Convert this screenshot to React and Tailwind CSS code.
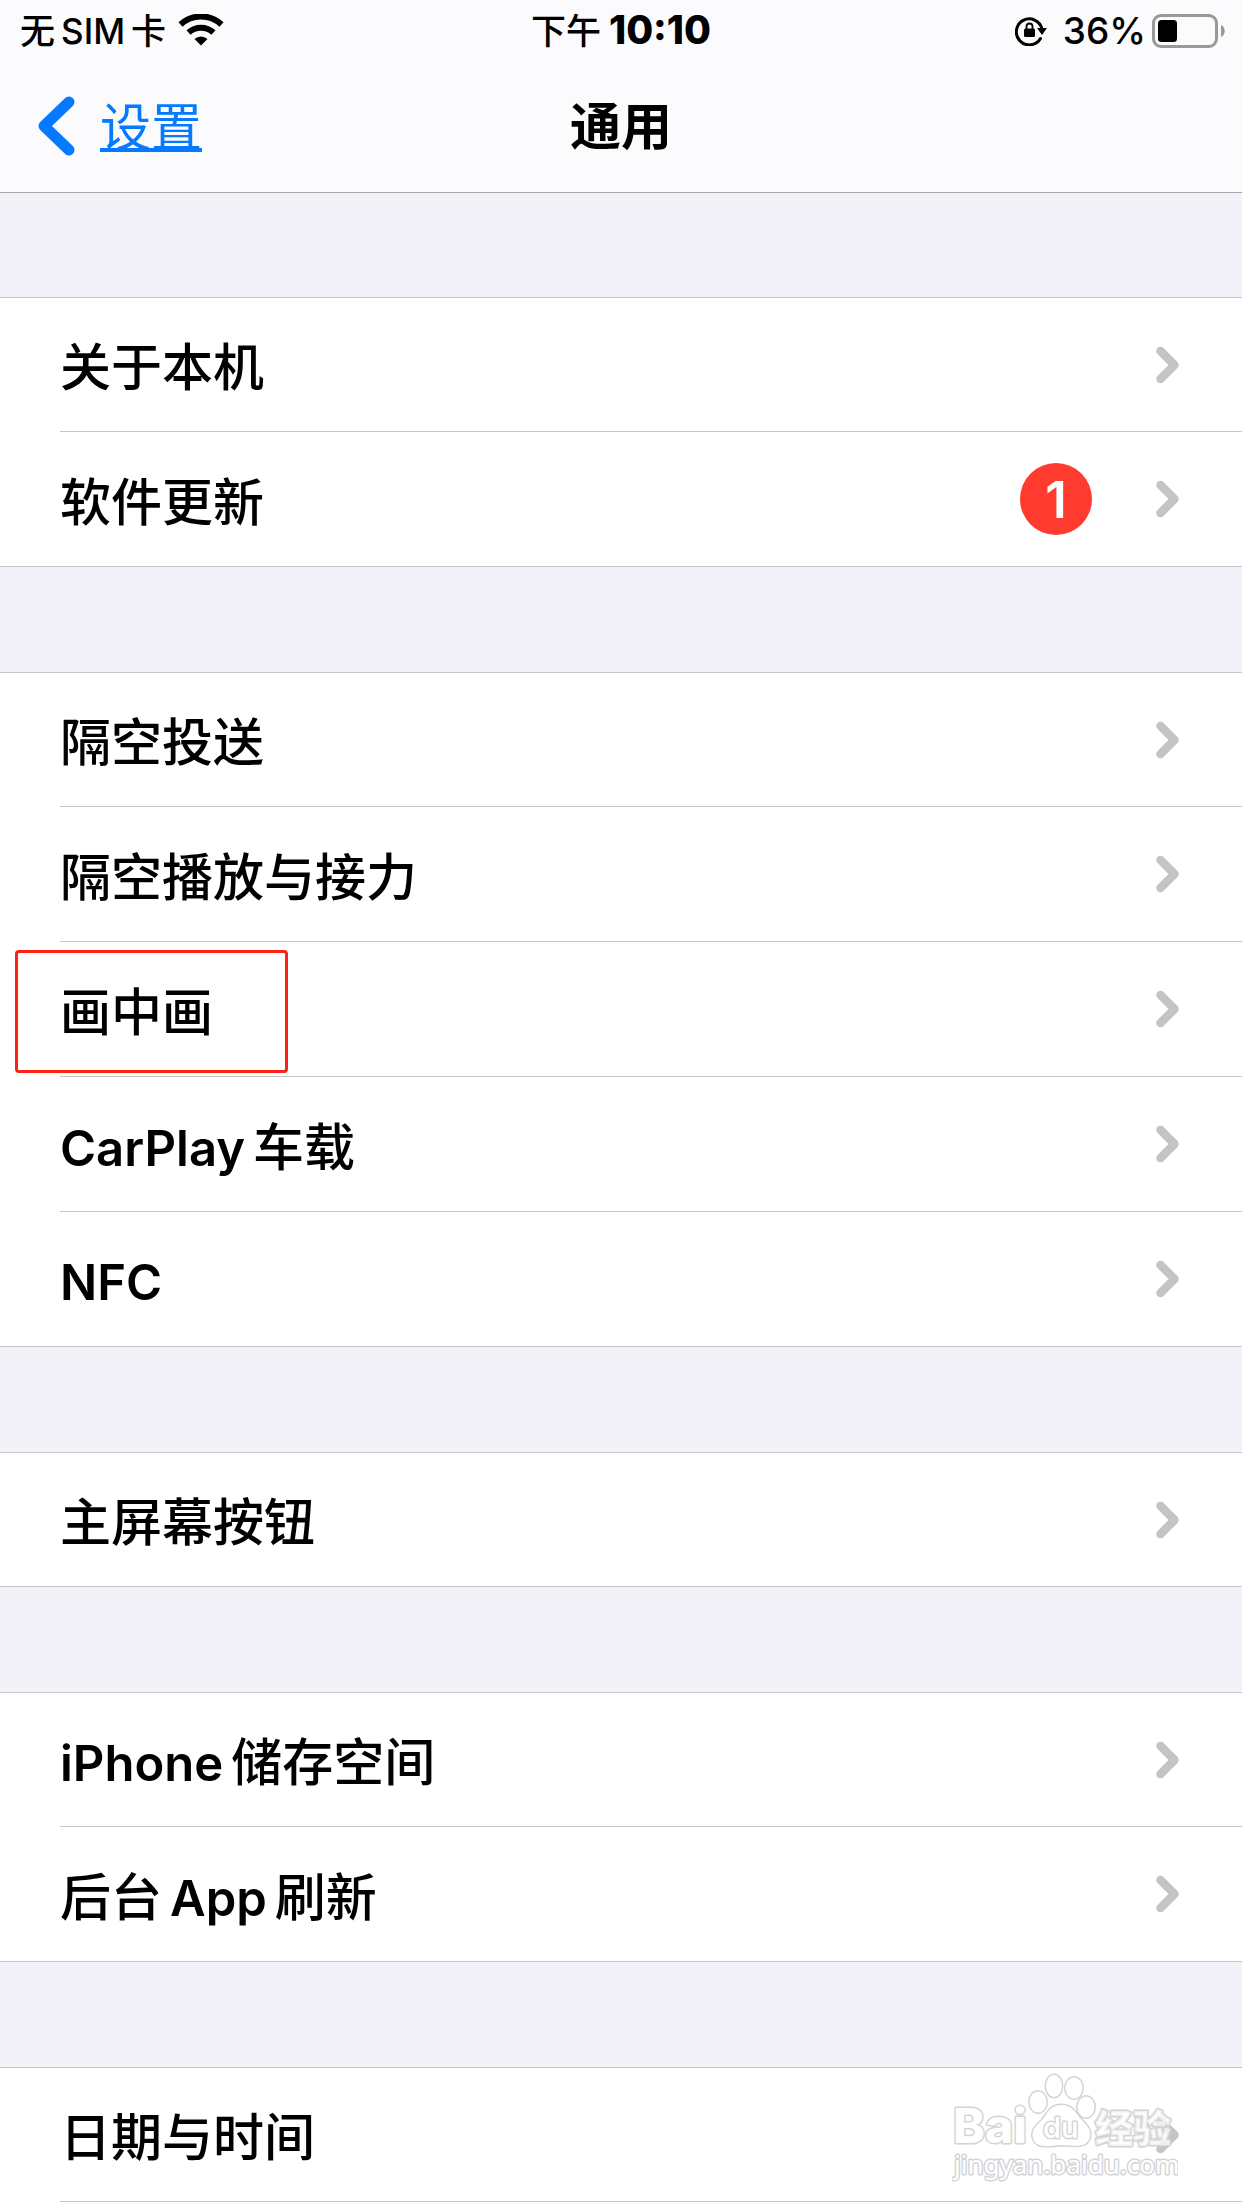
import React from 'react';

// Each label is a list of runs so that latin and chinese parts are set apart evenly
const GROUPS = [
    [
        { id: 'about', label: ['关于本机'] },
        { id: 'update', label: ['软件更新'], badge: 1 },
    ],
    [
        { id: 'airdrop', label: ['隔空投送'] },
        { id: 'airplay', label: ['隔空播放与接力'] },
        { id: 'pip', label: ['画中画'], highlighted: true },
        { id: 'carplay', label: ['CarPlay', '车载'] },
        { id: 'nfc', label: ['NFC'] },
    ],
    [{ id: 'home-button', label: ['主屏幕按钮'] }],
    [
        { id: 'storage', label: ['iPhone', '储存空间'] },
        { id: 'refresh', label: ['后台', 'App', '刷新'] },
    ],
    [{ id: 'date-time', label: ['日期与时间'], watermark: true }],
];

const isLatin = (text) => /^[A-Za-z]/.test(text);

const WifiIcon = () => (
    <svg className="w-[46px] h-[34px]" viewBox="0 0 46 34" fill="none" aria-hidden="true">
        <path d="M2.5 10.500a30 30 0 0 1 41 0" stroke="#000" strokeWidth="6" />
        <path d="M10.5 18.500a18.500 18.500 0 0 1 25 0" stroke="#000" strokeWidth="6" />
        <path d="M16.500 25a9.500 9.500 0 0 1 13 0L23 31.500z" fill="#000" />
    </svg>
);

const RotationLockIcon = () => (
    <svg className="w-8 h-[30px]" viewBox="0 0 32 30" fill="none" aria-hidden="true">
        <path d="M25.5 22.500A13 13 0 1 1 27 13" stroke="#000" strokeWidth="3" strokeLinecap="round" />
        <path d="M22 12h10l-5 7z" fill="#000" />
        <rect x="9" y="12.500" width="11" height="8.500" rx="1.500" fill="#000" />
        <path d="M11.500 13v-2.500a3 3 0 0 1 6 0V13" stroke="#000" strokeWidth="1.800" />
    </svg>
);

const BatteryIcon = () => (
    <svg className="w-[74px] h-[34px]" viewBox="0 0 74 34" fill="none" aria-hidden="true">
        <rect x="1.500" y="1.500" width="63" height="31" rx="7.500" stroke="#999" strokeWidth="3" />
        <rect x="6" y="6" width="19" height="22" rx="3.500" fill="#000" />
        <path d="M69 11c5 2 5 10 0 12z" fill="#999" />
    </svg>
);

const Chevron = () => (
    <svg className="w-6 h-[38px] shrink-0" viewBox="0 0 24 38" fill="none" aria-hidden="true">
        <path d="M4.500 5l14 14-14 14" stroke="#c4c4c6" strokeWidth="8.500" strokeLinecap="round" strokeLinejoin="round" />
    </svg>
);

const Watermark = () => (
    <svg
        className="absolute right-16 top-1 w-[226px] h-[112px]"
        viewBox="0 0 226 112"
        fill="#fff"
        stroke="#d4d4d6"
        strokeWidth="3"
        strokeLinejoin="round"
        paintOrder="stroke"
        aria-hidden="true"
    >
        <text x="1" y="71" fontFamily="Inter, sans-serif" fontSize="48" fontWeight="800">Bai</text>
        <ellipse cx="86" cy="30" rx="8.500" ry="10.500" />
        <ellipse cx="102" cy="14" rx="8" ry="11" />
        <ellipse cx="122" cy="16" rx="8.500" ry="10.500" />
        <ellipse cx="134" cy="35" rx="8.500" ry="10.500" />
        <path d="M109 33c-11 0-14 9-19 15-6 6-11 10-9 18 3 11 15 8 29 7 14 1 25 3 28-8 2-8-5-13-10-19-5-7-9-13-19-13z" />
        <text x="91" y="66" fontFamily="Inter, sans-serif" fontSize="29" fontWeight="500">du</text>
        <text x="143" y="70" fontFamily="'Noto Sans CJK SC', sans-serif" fontSize="38" fontWeight="900" fillOpacity="0.7">经验</text>
        <text x="2" y="102" fontFamily="'Noto Sans', sans-serif" fontSize="26">jingyan.baidu.com</text>
    </svg>
);

const StatusBar = () => (
    <div className="grid grid-cols-3 items-center h-[60px] pt-px px-4 text-[35px] leading-[58px] font-medium">
        <div className="flex items-center gap-3 pl-1">
            <span className="flex gap-1.5">
                <span>无</span>
                <span>SIM</span>
                <span>卡</span>
            </span>
            <WifiIcon />
        </div>
        <div className="flex items-baseline justify-center gap-2">
            <span>下午</span>
            <span className="text-[39px] font-extrabold">10:10</span>
        </div>
        <div className="flex items-center justify-end">
            <RotationLockIcon />
            <span className="ml-4 mr-1.5 text-[37px]">36%</span>
            <BatteryIcon />
        </div>
    </div>
);

const NavBar = () => (
    <nav className="grid grid-cols-3 items-center h-[132px] px-9 text-[51px]">
        <a href="#settings" className="flex items-center gap-6 text-[#067aff]">
            <svg className="w-10 h-[60px]" viewBox="0 0 40 60" fill="none" aria-hidden="true">
                <path d="M33 6L8 30l25 24" stroke="currentColor" strokeWidth="11" strokeLinecap="round" strokeLinejoin="round" />
            </svg>
            <span className="pt-0.5 underline decoration-4">设置</span>
        </a>
        <h1 className="text-center font-bold">通用</h1>
    </nav>
);

const SettingsRow = ({ row, first, divider }) => (
    <li className="relative pl-[60px]">
        <a
            href={`#${row.id}`}
            className={`box-content flex items-center justify-between ${first ? 'h-[133px]' : 'h-[134px]'} ${divider ? 'border-b border-[#c6c6c8]' : ''}`}
        >
            <span className="flex items-baseline gap-2 pt-1.5">
                {row.label.map((text) => (
                    <span key={text} className={isLatin(text) ? 'text-[49px] font-semibold' : 'font-medium'}>
                        {text}
                    </span>
                ))}
            </span>
            <span className="flex items-center gap-16 pr-[62px]">
                {row.badge && (
                    <span className="flex items-center justify-center size-[72px] rounded-full bg-[#ff3b30] text-white font-semibold">
                        {row.badge}
                    </span>
                )}
                <Chevron />
            </span>
        </a>
        {row.highlighted && (
            <span className="absolute left-[15px] top-2 w-[273px] h-[123px] rounded-sm border-3 border-[#ff2112]" />
        )}
        {row.watermark && <Watermark />}
    </li>
);

const App = () => (
    <div className="flex flex-col min-h-screen bg-[#f3f2f8] text-black text-[51px] leading-none font-[Inter,'Noto_Sans_CJK_SC',sans-serif]">
        <header className="bg-[#fbfbfd] border-b border-[#a9a9ad]">
            <StatusBar />
            <NavBar />
        </header>
        <main className="flex flex-col flex-1 gap-[105px] pt-[104px]">
            {GROUPS.map((rows, groupIndex) => {
                const open = groupIndex === GROUPS.length - 1;
                return (
                    <ul
                        key={rows[0].id}
                        className={`bg-white border-[#c6c6c8] ${open ? 'flex-1 border-t' : 'border-y'}`}
                    >
                        {rows.map((row, i) => (
                            <SettingsRow
                                key={row.id}
                                row={row}
                                first={i === 0}
                                divider={open || i < rows.length - 1}
                            />
                        ))}
                    </ul>
                );
            })}
        </main>
    </div>
);

export default App;
